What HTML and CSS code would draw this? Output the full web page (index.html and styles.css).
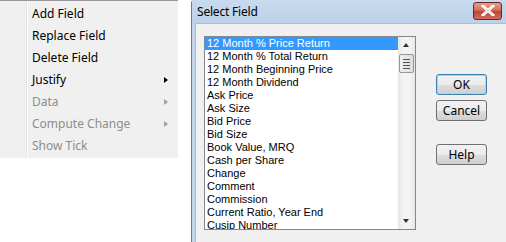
FILE: index.html
```html
<!DOCTYPE html>
<html lang="en">
<head>
    <meta charset="UTF-8">
    <title>Select Field</title>
    <link rel="stylesheet" href="styles.css">
</head>
<body>
    <div class="screen">
        <!-- context menu -->
        <ul class="menu">
            <li class="menu-item">Add Field</li>
            <li class="menu-item">Replace Field</li>
            <li class="menu-item">Delete Field</li>
            <li class="menu-item has-sub">Justify</li>
            <li class="menu-item has-sub disabled">Data</li>
            <li class="menu-item has-sub disabled">Compute Change</li>
            <li class="menu-item disabled">Show Tick</li>
        </ul>

        <!-- dialog -->
        <div class="dialog">
            <div class="title-bar">
                <span class="title">Select Field</span>
                <span class="close-btn">
                    <svg width="14" height="11" viewBox="0 0 14 11">
                        <path d="M2 1 L12 10 M12 1 L2 10" stroke="#fff" stroke-width="3" stroke-linecap="square"/>
                        <path d="M2 1 L12 10 M12 1 L2 10" stroke="#8a3a3a" stroke-width="0.6" fill="none" opacity="0.4"/>
                    </svg>
                </span>
            </div>
            <div class="client">
                <div class="listbox">
                    <ul class="list">
                        <li class="selected">12 Month % Price Return</li>
                        <li>12 Month % Total Return</li>
                        <li>12 Month Beginning Price</li>
                        <li>12 Month Dividend</li>
                        <li>Ask Price</li>
                        <li>Ask Size</li>
                        <li>Bid Price</li>
                        <li>Bid Size</li>
                        <li>Book Value, MRQ</li>
                        <li>Cash per Share</li>
                        <li>Change</li>
                        <li>Comment</li>
                        <li>Commission</li>
                        <li>Current Ratio, Year End</li>
                        <li>Cusip Number</li>
                    </ul>
                    <div class="scrollbar">
                        <span class="arrow up"></span>
                        <span class="thumb"><i></i><i></i><i></i><i></i></span>
                        <span class="track"></span>
                        <span class="arrow down"></span>
                    </div>
                </div>
                <div class="buttons">
                    <button class="btn default">OK</button>
                    <button class="btn">Cancel</button>
                    <button class="btn help">Help</button>
                </div>
            </div>
        </div>
    </div>
</body>
</html>
```

FILE: styles.css
```css
body {
    margin: 0;
    background: #fff;
    font-family: "Noto Sans", "DejaVu Sans", sans-serif;
    overflow: hidden;
}

.screen {
    display: flex;
    align-items: flex-start;
    height: 242px;
}

/* Context menu */
.menu {
    list-style: none;
    margin: 0;
    padding: 2px 0 1px 0;
    width: 178px;
    background: #f0f0f0;
    border-top: 1px solid #979797;
    background-image: linear-gradient(90deg, transparent 26px, #e2e3e3 26px, #e2e3e3 27px, #fff 27px, #fff 28px, transparent 28px);
}

.menu-item {
    height: 22px;
    line-height: 22px;
    padding-left: 32px;
    font-size: 12px;
    color: #000;
    position: relative;
}

.menu-item.disabled {
    color: #8d8d8d;
}

.has-sub::after {
    content: "";
    position: absolute;
    right: 10px;
    top: 8px;
    border-left: 4px solid #000;
    border-top: 3.5px solid transparent;
    border-bottom: 3.5px solid transparent;
}

.has-sub.disabled::after {
    border-left-color: #a0a0a0;
}

/* Dialog */
.dialog {
    flex: 1;
    margin-left: 13px;
    height: 242px;
    background: #c2d5ec;
    border-top-left-radius: 3px;
    border-left: 1px solid #6d7d90;
    display: flex;
    flex-direction: column;
}

.title-bar {
    height: 23px;
    display: flex;
    align-items: center;
    justify-content: space-between;
    padding-left: 5px;
    background: linear-gradient(#c9daee, #bcd1ea);
}

.title {
    font-size: 12px;
    letter-spacing: -0.2px;
    color: #000;
}

.close-btn {
    width: 27px;
    height: 16px;
    margin-right: 4px;
    margin-top: -2px;
    border: 1px solid #6b2424;
    border-radius: 3px;
    background: linear-gradient(#e3a193, #d0705d 45%, #c0442f 55%, #d0705d);
    display: flex;
    align-items: center;
    justify-content: center;
}

.client {
    flex: 1;
    margin-left: 3px;
    background: #f0f0f0;
    border-left: 1px solid #a7bad0;
    border-top: 1px solid #aebfd3;
    display: flex;
    align-items: flex-start;
    padding: 12px 0 0 8px;
}

.listbox {
    width: 210px;
    height: 192px;
    border: 1px solid #828790;
    background: #fff;
    display: flex;
    overflow: hidden;
}

.list {
    list-style: none;
    margin: 0;
    padding: 0;
    flex: 1;
    font-family: "Liberation Sans", Arial, sans-serif;
    font-size: 11px;
}

.list li {
    height: 13px;
    line-height: 13px;
    padding-left: 2px;
    color: #000;
    white-space: nowrap;
}

.list li.selected {
    background: #3399ff;
    color: #fff;
}

.scrollbar {
    width: 17px;
    display: flex;
    flex-direction: column;
    background: linear-gradient(90deg, #e6e6e6, #f3f3f3 30%, #f3f3f3 70%, #e6e6e6);
}

.arrow {
    height: 17px;
    position: relative;
}

.arrow::after {
    content: "";
    position: absolute;
    left: 5px;
    border-left: 3.5px solid transparent;
    border-right: 3.5px solid transparent;
}

.arrow.up::after {
    top: 6px;
    border-bottom: 4px solid #333;
}

.arrow.down::after {
    top: 7px;
    border-top: 4px solid #333;
}

.thumb {
    height: 19px;
    margin: 0 1px;
    border: 1px solid #979797;
    border-radius: 2px;
    background: linear-gradient(90deg, #f0f0f0, #dcdcdc);
    display: flex;
    flex-direction: column;
    justify-content: center;
    align-items: center;
    gap: 2px;
    box-sizing: border-box;
}

.thumb i {
    width: 7px;
    height: 1px;
    background: #555;
}

.track {
    flex: 1;
}

.buttons {
    display: flex;
    flex-direction: column;
    margin-left: 20px;
    margin-top: 38px;
    gap: 5px;
}

.btn {
    width: 51px;
    height: 21px;
    padding: 0;
    font-family: "Noto Sans", "DejaVu Sans", sans-serif;
    font-size: 12px;
    color: #000;
    border: 1px solid #707070;
    border-radius: 3px;
    background: linear-gradient(#f2f2f2, #ebebeb 50%, #dddddd 51%, #cfcfcf);
}

.btn.default {
    border-color: #3c7fb1;
    box-shadow: inset 0 0 0 1px #9edaf8;
}

.btn.help {
    margin-top: 18px;
}
```
